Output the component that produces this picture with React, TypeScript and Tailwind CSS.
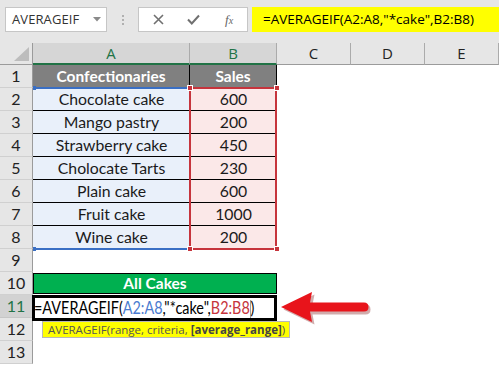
import React from "react";

const data: [string, string][] = [
  ["Chocolate cake", "600"],
  ["Mango pastry", "200"],
  ["Strawberry cake", "450"],
  ["Cholocate Tarts", "230"],
  ["Plain cake", "600"],
  ["Fruit cake", "1000"],
  ["Wine cake", "200"],
];

function RowHead({ n, active }: { n: number; active?: boolean }) {
  return (
    <div
      className={
        "flex items-center justify-center border-b border-r text-[16px] font-['Lato',sans-serif] " +
        (active
          ? "bg-[#d2d2d2] text-[#217346] border-b-[#c6c6c6] border-r-[#9b9b9b]"
          : "bg-[#e6e6e6] text-[#222] border-b-[#d0d0d0] border-r-[#9b9b9b]")
      }
    >
      {n}
    </div>
  );
}

function Empty() {
  return <div className="bg-white" />;
}

export default function App() {
  return (
    <div className="relative w-[499px] h-[366px] overflow-hidden bg-white font-['Lato',sans-serif]">
      {/* Toolbar */}
      <div className="h-[43px] bg-[#e6e6e6] flex items-start pt-[7px] pl-[5px]">
        <div className="w-[102px] h-[25px] bg-white border border-[#c6c6c6] flex items-center justify-between pl-[6px] pr-[5px]">
          <span className="text-[13px] text-[#333] font-['Open_Sans',sans-serif] tracking-[0.1px]">AVERAGEIF</span>
          <svg width="8" height="5" viewBox="0 0 8 5">
            <path d="M0 0 L8 0 L4 4.5 Z" fill="#8a8a8a" />
          </svg>
        </div>
        <div className="w-[31px] flex flex-col items-center gap-[2px] pt-[8px]">
          <div className="w-[2px] h-[2px] bg-[#b0b0b0]" />
          <div className="w-[2px] h-[2px] bg-[#b0b0b0]" />
          <div className="w-[2px] h-[2px] bg-[#b0b0b0]" />
        </div>
        <div className="w-[110px] h-[25px] bg-white border border-[#c6c6c6] flex items-center">
          <div className="w-[37px] flex justify-center pl-[2px]">
            <svg width="11" height="11" viewBox="0 0 11 11">
              <path d="M1 1 L10 10 M10 1 L1 10" stroke="#707070" strokeWidth="1.6" />
            </svg>
          </div>
          <div className="w-[36px] flex justify-center">
            <svg width="13" height="11" viewBox="0 0 13 11">
              <path d="M1 5.5 L4.8 9.5 L12 1.5" stroke="#707070" strokeWidth="2" fill="none" />
            </svg>
          </div>
          <div className="w-[36px] flex justify-center">
            <span className="text-[13px] italic text-[#666] font-['Liberation_Serif',serif] leading-none">
              f<span className="text-[10px]">x</span>
            </span>
          </div>
        </div>
        <div className="ml-[4px] flex-1 h-[25px] bg-[#ffff00] flex items-center pl-[11px]">
          <span className="text-[13.5px] text-black font-['Open_Sans',sans-serif] whitespace-nowrap">
            =AVERAGEIF(A2:A8,"*cake",B2:B8)
          </span>
        </div>
      </div>

      {/* Grid */}
      <div className="grid grid-cols-[33px_157px_87px_74px_74px_74px] grid-rows-[22px_repeat(13,23px)]">
        {/* header row */}
        <div className="relative bg-[#e6e6e6] border-r border-b border-[#9b9b9b]">
          <svg className="absolute right-[3px] bottom-[3px]" width="15" height="14" viewBox="0 0 15 14">
            <path d="M15 0 L15 14 L0 14 Z" fill="#bdbdbd" />
          </svg>
        </div>
        {["A", "B"].map((c) => (
          <div
            key={c}
            className="flex items-center justify-center bg-[#d6d6d6] border-r border-r-[#ababab] border-b-2 border-b-[#217346] text-[15px] text-[#217346] font-['Open_Sans',sans-serif]"
          >
            {c}
          </div>
        ))}
        {["C", "D", "E"].map((c) => (
          <div
            key={c}
            className="flex items-center justify-center bg-[#e6e6e6] border-r border-r-[#ababab] border-b border-b-[#9b9b9b] text-[15px] text-[#222] font-['Open_Sans',sans-serif]"
          >
            {c}
          </div>
        ))}

        {/* row 1 */}
        <RowHead n={1} />
        <div className="flex items-center justify-center bg-[#808080] border-r border-black text-white font-bold text-[15.5px]">
          Confectionaries
        </div>
        <div className="flex items-center justify-center bg-[#808080] border-r border-black text-white font-bold text-[15.5px]">
          Sales
        </div>
        <Empty />
        <Empty />
        <Empty />

        {/* rows 2-8 */}
        {data.map(([name, val], i) => (
          <React.Fragment key={name}>
            <RowHead n={i + 2} />
            <div className="flex items-center justify-center bg-[#e9f0fa] border-b border-black text-[15.8px] text-[#1a1a1a]">
              {name}
            </div>
            <div className="flex items-center justify-center bg-[#fbe8e8] border-b border-black text-[15.8px] text-[#1a1a1a]">
              {val}
            </div>
            <Empty />
            <Empty />
            <Empty />
          </React.Fragment>
        ))}

        {/* row 9 */}
        <RowHead n={9} />
        <Empty />
        <Empty />
        <Empty />
        <Empty />
        <Empty />

        {/* row 10 */}
        <RowHead n={10} />
        <div className="col-span-2 flex items-center justify-center bg-[#00b050] border border-black text-white font-bold text-[15.5px] mt-[1px] mb-[1px]">
          All Cakes
        </div>
        <Empty />
        <Empty />
        <Empty />

        {/* row 11 */}
        <RowHead n={11} active />
        <div className="col-span-2 bg-white" />
        <Empty />
        <Empty />
        <Empty />

        {/* rows 12-13 */}
        <RowHead n={12} />
        <Empty />
        <Empty />
        <Empty />
        <Empty />
        <Empty />
        <RowHead n={13} />
        <Empty />
        <Empty />
        <Empty />
        <Empty />
        <Empty />
      </div>

      {/* Blue range border A2:A8 */}
      <div className="absolute left-[35px] top-[87px] w-[153px] h-[163px] border-y-2 border-[#3a6fc4]" />
      <div className="absolute left-[33px] top-[86px] w-[3px] h-[4px] bg-[#3a6fc4]" />
      <div className="absolute left-[33px] top-[247px] w-[3px] h-[4px] bg-[#3a6fc4]" />

      {/* Red range border B2:B8 */}
      <div className="absolute left-[189px] top-[87px] w-[88px] h-[163px] border-2 border-[#c6343c]" />
      {[
        "left-[187px] top-[85px]",
        "left-[274px] top-[85px]",
        "left-[187px] top-[246px]",
        "left-[274px] top-[246px]",
      ].map((p) => (
        <div key={p} className={"absolute w-[6px] h-[6px] bg-[#c6343c] border border-white " + p} />
      ))}

      {/* Edit cell */}
      <div className="absolute left-[32px] top-[295px] w-[245px] h-[26px] border-[3px] border-black bg-white flex items-center overflow-visible">
        <span className="text-[18px] text-black whitespace-nowrap leading-none -ml-[1px] scale-x-[0.8] origin-left inline-block">
          =AVERAGEIF(<span className="text-[#4a7bd0]">A2:A8</span>,"*cake",<span className="text-[#c6343c]">B2:B8</span>
          <span className="inline-block w-[1px] h-[18px] bg-[#888] align-middle" />)
        </span>
      </div>

      {/* Tooltip */}
      <div className="absolute left-[42px] top-[321px] w-[248px] h-[17px] bg-[#ffff00] border border-[#b8b8b8] flex items-center pl-[5px]">
        <span className="text-[11.5px] text-[#555] font-['Open_Sans',sans-serif] whitespace-nowrap leading-none">
          AVERAGEIF(range, criteria, <b className="text-[#444]">[average_range]</b>)
        </span>
      </div>

      {/* Red arrow */}
      <svg className="absolute left-[278px] top-[290px]" width="96" height="38" viewBox="0 0 96 38">
        <path
          d="M4 18 L35 3 L33 13 L86 13 Q91 13 91 18 Q91 23 86 23 L33 23 L35 33 Z"
          fill="#7a1010"
          opacity="0.35"
          transform="translate(1.5,1.5)"
        />
        <path d="M3 17 L34 2 L32 12.5 L86 12.5 Q90.5 12.5 90.5 17 Q90.5 21.5 86 21.5 L32 21.5 L34 32 Z" fill="#e8141b" />
      </svg>
    </div>
  );
}
